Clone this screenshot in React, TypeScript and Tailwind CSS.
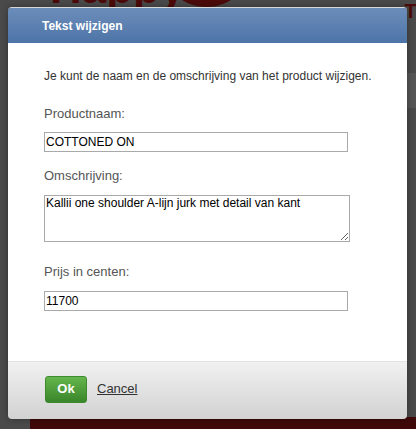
import { useState, type ReactNode } from 'react'

/* -------------------------------------------------------------------------- */
/* Dimmed page behind the modal                                                */
/* -------------------------------------------------------------------------- */

const Backdrop = () => (
  <>
    <div className="absolute left-[50px] top-[-34px] text-[44px] font-bold leading-none text-[#4c0a0a]">
      Happy
    </div>
    <div className="absolute left-[160px] top-[-86px] h-[93px] w-[93px] rounded-full bg-[#4c0a0a]" />
    <div className="absolute right-[-6px] top-[-4px] text-[20px] font-bold text-[#4c0a0a]">Ti</div>
    <div className="absolute right-0 top-[73px] h-[35px] w-[9px] bg-[#555555]" />
    <div className="absolute bottom-0 left-[30px] right-0 h-[12px] bg-[#3f0909]" />
  </>
)

/* -------------------------------------------------------------------------- */
/* Labelled field                                                              */
/* -------------------------------------------------------------------------- */

const Field = ({ label, gap, children }: { label: string; gap: string; children: ReactNode }) => (
  <div className={`flex flex-col ${gap}`}>
    <p className="text-[13px] leading-[16px] text-[#555555]">{label}</p>
    {children}
  </div>
)

const inputClass =
  'block h-[20px] w-[304px] border border-[#a9a9a9] bg-white px-[1px] text-[12px] text-black outline-none'

export default function App() {
  const [name, setName] = useState('COTTONED ON')
  const [desc, setDesc] = useState('Kallii one shoulder A-lijn jurk met detail van kant')
  const [price, setPrice] = useState('11700')

  return (
    <div className="relative h-[429px] w-[416px] overflow-hidden bg-[#4a4a4a] font-['Liberation_Sans',Arial,sans-serif]">
      <Backdrop />

      <div className="relative pl-[8px] pt-[7px]">
        <div className="flex w-[399px] flex-col overflow-hidden rounded-[4px] border-t border-[#d8d8d8] shadow-[0_0_6px_rgba(0,0,0,0.35)]">
          {/* Header */}
          <div className="flex h-[35px] items-center bg-gradient-to-b from-[#6c8dba] to-[#4d74a7] pl-[34px]">
            <h1 className="text-[12px] font-bold text-white">Tekst wijzigen</h1>
          </div>

          {/* Body */}
          <div className="flex h-[318px] flex-col gap-[22px] bg-white pl-[36px] pt-[25px]">
            <p className="text-[12px] leading-[16px] text-[#333333]">
              Je kunt de naam en de omschrijving van het product wijzigen.
            </p>

            <div className="flex flex-col gap-[16px]">
              <Field label="Productnaam:" gap="gap-[10px]">
                <input className={inputClass} value={name} onChange={(e) => setName(e.target.value)} />
              </Field>

              <Field label="Omschrijving:" gap="gap-[11px]">
                <textarea
                  className="block h-[47px] w-[306px] resize border border-[#a9a9a9] bg-white px-[1px] py-0 text-[12px] leading-[15px] text-black outline-none"
                  value={desc}
                  onChange={(e) => setDesc(e.target.value)}
                />
              </Field>
            </div>

            <Field label="Prijs in centen:" gap="gap-[11px]">
              <input className={inputClass} value={price} onChange={(e) => setPrice(e.target.value)} />
            </Field>
          </div>

          {/* Footer */}
          <div className="flex h-[58px] items-center gap-[10px] border-t border-[#e2e2e2] bg-gradient-to-b from-[#f1f1f2] to-[#d2d2d3] pb-[3px] pl-[37px]">
            <button className="h-[27px] w-[42px] rounded-[3px] border border-[#3d8a2e] bg-gradient-to-b from-[#64b64c] to-[#3a862b] text-[13px] font-bold text-white">
              Ok
            </button>
            <a href="#" className="text-[13px] text-[#333333] underline">
              Cancel
            </a>
          </div>
        </div>
      </div>
    </div>
  )
}
